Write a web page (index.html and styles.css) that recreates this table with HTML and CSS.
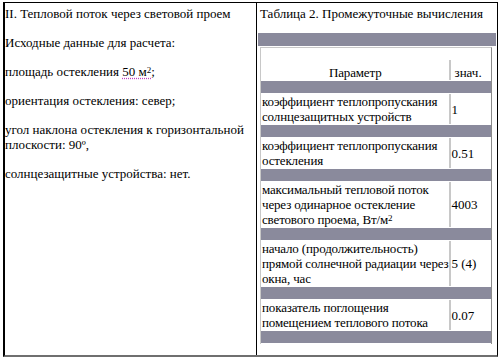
FILE: index.html
```html
<!DOCTYPE html>
<html lang="ru">
<head>
<meta charset="utf-8">
<title>Тепловой поток через световой проем</title>
<link rel="stylesheet" href="styles.css">
</head>
<body>
<div class="page">
  <div class="col left">
    <p>II. Тепловой поток через световой проем</p>
    <p>Исходные данные для расчета:</p>
    <p>площадь остекления <span class="spell">50 м<sup>2</sup></span>;</p>
    <p>ориентация остекления: север;</p>
    <p>угол наклона остекления к горизонтальной плоскости: 90º,</p>
    <p>солнцезащитные устройства: нет.</p>
  </div>
  <div class="col right">
    <p class="caption">Таблица 2. Промежуточные вычисления</p>
    <div class="bar"></div>
    <table class="calc">
      <tr class="gap"><td colspan="2"></td></tr>
      <tr class="head"><th class="param">Параметр</th><th class="val">знач.</th></tr>
      <tr class="sep"><td colspan="2"></td></tr>
      <tr><td class="param">коэффициент теплопропускания<br>солнцезащитных устройств</td><td class="val">1</td></tr>
      <tr class="sep"><td colspan="2"></td></tr>
      <tr><td class="param">коэффициент теплопропускания<br>остекления</td><td class="val">0.51</td></tr>
      <tr class="sep"><td colspan="2"></td></tr>
      <tr><td class="param">максимальный тепловой поток<br>через одинарное остекление<br>светового проема, Вт/м<sup>2</sup></td><td class="val">4003</td></tr>
      <tr class="sep"><td colspan="2"></td></tr>
      <tr><td class="param">начало (продолжительность)<br>прямой солнечной радиации через<br>окна, час</td><td class="val">5 (4)</td></tr>
      <tr class="sep"><td colspan="2"></td></tr>
      <tr><td class="param">показатель поглощения<br>помещением теплового потока</td><td class="val">0.07</td></tr>
      <tr class="sep"><td colspan="2"></td></tr>
    </table>
  </div>
</div>
</body>
</html>
```
FILE: styles.css
```css
html, body {
  margin: 0;
  padding: 0;
  background: #fff;
}

body {
  font-family: "Liberation Serif", "Times New Roman", serif;
  font-size: 13px;
  line-height: 15px;
  color: #000;
}

.page {
  box-sizing: border-box;
  display: grid;
  grid-template-columns: 252px 1fr;
  width: 495px;
  height: 355px;
  margin: 2px 0 0 3px;
  border: 1px solid #000;
  border-left-width: 2px;
  border-bottom: 2px solid #6f6f6f;
}

.left {
  border-right: 1px solid #000;
  padding: 3px 2px 0 0;
}

.left p {
  margin: 0 0 14px;
}

sup {
  font-size: 9px;
  line-height: 9px;
  vertical-align: 3px;
}

.spell {
  text-decoration: underline dotted #c040c0;
  text-underline-offset: 2px;
}

.right {
  display: flex;
  flex-direction: column;
  padding: 3px 1px 0 1px;
}

.caption {
  margin: 0 0 12px 2px;
}

.bar {
  height: 13px;
  background: #8a8a9c;
}

.calc {
  width: 232px;
  margin: 1px 0 0 2px;
  border-collapse: separate;
  border-spacing: 0 1px;
  border-top: 1px solid #c8c8c8;
  border-left: 1px solid #c8c8c8;
  border-right: 1px solid #8a8a8a;
  font-size: 13px;
  line-height: 15px;
}

.calc td, .calc th {
  padding: 0;
  font-weight: normal;
  vertical-align: middle;
  text-align: left;
}

.calc .gap td {
  height: 10px;
}

.calc .head th {
  height: 20px;
  vertical-align: bottom;
}

.calc .head .param {
  text-align: center;
}

.calc .sep td {
  height: 12px;
  background: #8a8a9c;
}

.calc .param {
  padding-left: 1px;
  white-space: nowrap;
  letter-spacing: -0.15px;
}

.calc .val {
  width: 39px;
  border-left: 2px solid #c8c8c8;
  padding-left: 1px;
  white-space: nowrap;
}

.calc .head .val {
  padding-left: 4px;
}
```
